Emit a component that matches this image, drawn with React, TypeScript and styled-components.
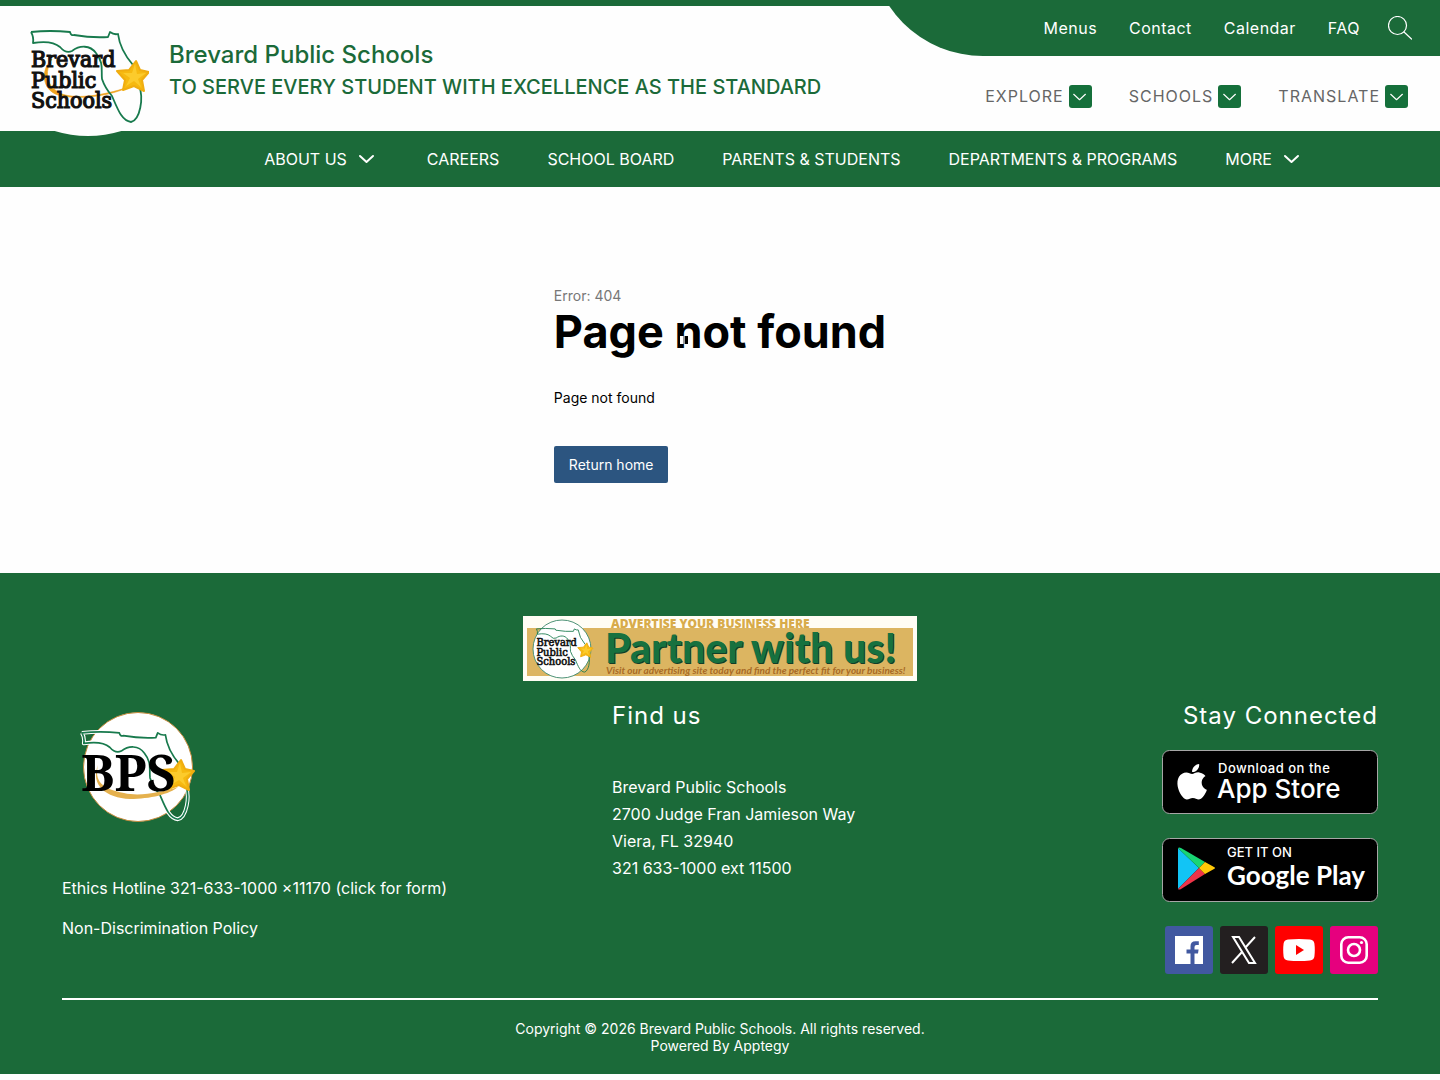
import React from 'react';
import styled, { createGlobalStyle } from 'styled-components';

const green = '#1b6a39';
const sans = `Inter, "Liberation Sans", sans-serif`;

const Global = createGlobalStyle`
  * { box-sizing: border-box; }
  body { margin: 0; background: #fff; font-family: ${sans}; font-size: 16px; color: #000; }
  a { color: inherit; text-decoration: none; }
  button { font: inherit; border: 0; padding: 0; background: none; color: inherit; cursor: pointer; }
  h1, h2, p, ul { margin: 0; padding: 0; }
  ul { list-style: none; }
  svg { display: block; }
`;

const Header = styled.header`
  display: flex;
  justify-content: space-between;
  border-top: 6px solid ${green};
  background: #fefefe;
  height: 131px;
`;
const Brand = styled.a`
  display: flex;
  gap: 20px;
  padding-left: 28px;
  color: ${green};
  font-weight: 500;
`;
const LogoBox = styled.span`
  position: relative;
  z-index: 1;
  width: 121px;
  height: 130px;
`;
const BrandText = styled.span`
  display: flex;
  flex-direction: column;
  padding-top: 32px;
`;
const BrandName = styled.span`
  font-size: 24px;
  line-height: 34px;
`;
const Motto = styled.span`
  font-size: 20px;
  line-height: 30px;
`;
const HeaderRight = styled.div`
  display: flex;
  flex-direction: column;
  align-items: flex-end;
  margin-top: -6px;
`;
const TopLinks = styled.nav`
  position: relative;
  overflow: hidden;
  display: flex;
  align-items: center;
  gap: 32px;
  height: 56px;
  padding: 0 28px 0 174px;
  color: #fff;
  letter-spacing: 0.03em;
  &::before {
    content: '';
    position: absolute;
    inset: -57px 0 0 0;
    border-bottom-left-radius: 113px;
    background: ${green};
  }
  > * { position: relative; }
`;
const SearchButton = styled.button`
  margin-left: -4px;
`;
const Selectors = styled.div`
  display: flex;
  gap: 37px;
  padding: 29px 32px 0 0;
`;
const Selector = styled.button`
  display: flex;
  align-items: flex-start;
  gap: 5px;
  color: #666;
  letter-spacing: 1px;
  line-height: 22px;
`;
const Badge = styled.span`
  display: grid;
  place-items: center;
  width: 23px;
  height: 23px;
  border-radius: 3px;
  background: #15703b;
`;
const MainNav = styled.nav`
  background: ${green};
  color: #fff;
  padding-left: 128px;
  ul { display: flex; justify-content: center; gap: 48px; }
  a, button { display: flex; align-items: center; gap: 10px; height: 56px; }
  svg { margin-right: 2px; }
`;
const Main = styled.main`
  display: flex;
  justify-content: center;
  background: #fefefe;
  padding: 100px 24px 90px;
`;
const ErrorCode = styled.p`
  font-size: 14px;
  line-height: 18px;
  color: #777;
`;
const Title = styled.h1`
  position: relative;
  font-size: 45px;
  line-height: 54px;
  font-weight: 700;
`;
const PauseMark = styled.span`
  position: absolute;
  left: 126px;
  top: 31px;
  width: 8px;
  height: 8px;
  background: linear-gradient(90deg, #fff 3px, #999 3px 5px, #000 5px);
`;
const Message = styled.p`
  margin: 29px 0 38px;
  font-size: 14px;
  line-height: 20px;
`;
const HomeLink = styled.a`
  display: inline-block;
  padding: 0 15px;
  border-radius: 2px;
  background: #2c5580;
  color: #fff;
  font-size: 14px;
  line-height: 37px;
`;
const Footer = styled.footer`
  background: ${green};
  color: #fff;
  padding: 43px 62px 20px;
`;
const Banner = styled.a`
  display: block;
  width: 394px;
  margin: 0 auto 18px;
`;
const PartnerHeadline = styled.text`
  font: 900 41px Lato, sans-serif;
  fill: #17713f;
  text-shadow: 1px 1px 0 #123d27;
`;
const Columns = styled.div`
  display: grid;
  grid-template-columns: 550px 1fr auto;
  height: 275px;
`;
const Policies = styled.div`
  display: flex;
  flex-direction: column;
  align-items: flex-start;
  gap: 16px;
  line-height: 24px;
  svg { margin: 12px 0 37px 16px; }
`;
const FooterTitle = styled.h2`
  font-size: 24px;
  line-height: 34px;
  font-weight: 400;
  letter-spacing: 1px;
`;
const Address = styled.address`
  margin-top: 41px;
  font-style: normal;
  line-height: 27px;
`;
const Connect = styled.div`
  display: flex;
  flex-direction: column;
  align-items: flex-end;
`;
const StoreLink = styled.a`
  margin: 17px 0 7px;
`;
const Socials = styled.div`
  display: flex;
  gap: 7px;
  margin-top: 17px;
`;
const Social = styled.a<{ $bg: string }>`
  display: grid;
  place-items: center;
  width: 48px;
  height: 48px;
  border-radius: 3px;
  background: ${(p) => p.$bg};
`;
const Legal = styled.div`
  margin-top: 24px;
  padding-top: 20px;
  border-top: 2px solid #fff;
  text-align: center;
  font-size: 14px;
  line-height: 17px;
`;

const Chevron = ({ w = 20, s = 2 }: { w?: number; s?: number }) => (
  <svg width={w} height={w} viewBox="0 0 20 20" fill="none" stroke="#fff" strokeWidth={s} strokeLinecap="round" strokeLinejoin="round" aria-hidden="true">
    <path d="M3 7l6.500 6 6.500-6" />
  </svg>
);

const serif = '"Noto Serif", "DejaVu Serif", "Liberation Serif", serif';
const wordSerif = '"DejaVu Serif Condensed", "DejaVu Serif", serif';

const Star = () => (
  <g>
    <path d="M108 33l4 9 9 2-7 8 2 11-10-5-11 4 2-10-8-9 12-1z" fill="#f6b910" stroke="#f0ad10" strokeWidth="2" strokeLinejoin="round" />
    <path d="M107 36l2 10 9-1-8 6 3 8-7-6-8 5 4-8-7-5 9 0z" fill="#fccb2c" />
  </g>
);

const Florida = ({ halo = false }: { halo?: boolean }) => {
  const d =
    'M3 4Q22 2 42 4Q43 8 46 7Q64 10 80 9L82 4Q86 7 90 6Q92 22 105 37M3 4Q6 9 5 15Q24 12 32 19Q38 26 44 23C52 17 62 17 68 25C76 35 73 42 74 51Q77 60 84 68C90 82 94 93 103 94C112 92 116 70 111 58';
  return (
    <g fill="none" strokeLinejoin="round">
      {halo && <path d={d} stroke="#fff" strokeWidth="4" />}
      <path d={d} stroke="#187a4d" strokeWidth="1.800" />
    </g>
  );
};

const Words = () => (
  <g fontFamily={wordSerif} fontSize="23" fill="#111" stroke="#111" strokeWidth="1.200">
    <text x="3" y="39">Brevard</text>
    <text x="3" y="60">Public</text>
    <text x="3" y="80">Schools</text>
  </g>
);

const BrevardLogo = () => (
  <svg width="121" height="130" viewBox="0 0 121 130" role="img" aria-label="Brevard Public Schools logo">
    <ellipse cx="60" cy="65" rx="87" ry="65" fill="#fefefe" />
    <g transform="translate(0 22)">
      <path d="M24 31C12 42 14 62 30 67C52 73 86 67 103 58C82 66 50 72 34 66C18 59 16 44 24 31z" fill="#f0a31f" stroke="#f0a31f" strokeWidth=".6" />
      <Florida />
      <Words />
      <Star />
    </g>
  </svg>
);

const BpsLogo = () => (
  <svg width="120" height="112" viewBox="0 0 120 112" role="img" aria-label="BPS logo">
    <circle cx="60" cy="56" r="54.500" fill="#fff" stroke="#c58a3b" />
    <g transform="translate(0 18)">
      <g transform="translate(1 0) scale(.96)"><Florida halo /></g>
      <path d="M20 36C12 56 28 69 52 70C72 70 92 65 100 58C84 63 62 68 46 64C24 60 16 52 20 36z" fill="#e5b14e" />
      <g transform="translate(-5 -2)"><Star /></g>
      <text x="3" y="62" fontFamily={serif} fontSize="50" fontWeight="700" fill="#000">BPS</text>
    </g>
  </svg>
);

const PartnerBanner = () => (
  <svg width="394" height="65" viewBox="0 0 394 65" role="img" aria-label="Partner with us">
    <rect width="394" height="65" fill="#fffdf4" />
    <rect x="4" y="12" width="386" height="48" fill="#dcb561" />
    <circle cx="39" cy="33" r="29" fill="#fff" stroke="#4d9277" />
    <g transform="translate(12 11) scale(.48)"><Florida /><Star /><Words /></g>
    <text x="88" y="12" fontFamily='"Open Sans", sans-serif' fontSize="12" fontWeight="800" fill="#d8ab4a">ADVERTISE YOUR BUSINESS HERE</text>
    <PartnerHeadline x="82" y="47">Partner with us!</PartnerHeadline>
    <text x="83" y="58" fontFamily="Lato, sans-serif" fontSize="10" fontStyle="italic" fontWeight="700" fill="#a86a25">Visit our advertising site today and find the perfect fit for your business!</text>
  </svg>
);

const AppStore = () => (
  <svg width="216" height="64" viewBox="0 0 216 64" role="img" aria-label="Download on the App Store">
    <rect x="0.500" y="0.500" width="215" height="63" rx="7" fill="#000" stroke="#a6a6a6" />
    <path transform="translate(6 8) scale(1.800)" fill="#fff" d="M18.700 13.700c0-2.400 2-3.600 2.100-3.700-1.200-1.700-3-1.900-3.600-2-1.500-.2-3 .9-3.800.9s-2-.9-3.200-.9C8.500 8 7 9 6.100 10.400c-1.800 3-.5 7.600 1.200 10.100.9 1.200 1.900 2.600 3.200 2.500s1.800-.8 3.300-.8 2 .8 3.300.8c1.400 0 2.300-1.200 3.100-2.400 1-1.400 1.400-2.800 1.400-2.900 0 0-2.900-1.100-2.900-4zM16.300 6.500c.7-.8 1.200-2 1-3.200-1 0-2.200.7-2.900 1.500-.6.700-1.200 1.900-1 3 1.100.1 2.200-.5 2.900-1.300z" />
    <text x="56" y="23" fill="#fff" fontFamily={sans} fontSize="13" fontWeight="500" letterSpacing=".5">Download on the</text>
    <text x="55" y="48" fill="#fff" fontFamily={sans} fontSize="26" fontWeight="500">App Store</text>
  </svg>
);

const GooglePlay = () => (
  <svg width="216" height="64" viewBox="0 0 216 64" role="img" aria-label="Get it on Google Play">
    <rect x="0.500" y="0.500" width="215" height="63" rx="7" fill="#000" stroke="#a6a6a6" />
    <path d="M16 10v41l21-21z" fill="#12c4f5" />
    <path d="M16 10l21 20 6-6-24-14q-2-1-3 0z" fill="#19d574" />
    <path d="M16 51l21-21 6 6-24 15q-2 1-3 0z" fill="#ee3448" />
    <path d="M43 24l9 5q2 1 0 2l-9 5-6-6z" fill="#ffc907" />
    <text x="65" y="19" fill="#fff" fontFamily={sans} fontSize="13" fontWeight="500">GET IT ON</text>
    <text x="65" y="47" fill="#fff" fontFamily="Lato, sans-serif" fontSize="26" fontWeight="700">Google Play</text>
  </svg>
);

const Facebook = () => (
  <svg width="28" height="28" viewBox="0 0 28 28" aria-hidden="true">
    <path fill="#fff" d="M0 0h28v28h-8.500V17.500h3.500l.6-4h-4.100V11q0-2 2-2h2.300V5.200h-3.300q-5 0-5 5v3.300h-4v4h4V28H0z" />
  </svg>
);
const XMark = () => (
  <svg width="26" height="28" viewBox="0 0 26 28" fill="none" stroke="#fff" strokeWidth="2" aria-hidden="true">
    <path d="M2 1h6l16 26h-6zM24 1L14 12M11 16L1 27" />
  </svg>
);
const YouTube = () => (
  <svg width="32" height="22" viewBox="0 0 32 22" aria-hidden="true">
    <path fill="#fff" d="M5 .6q11-1 22 0 4 .4 4.400 4 .8 6.400 0 12.800-.4 3.600-4.400 4-11 1-22 0-4-.4-4.400-4-.8-6.400 0-12.800Q1 1 5 .6z" />
    <path fill="#f00" d="M13 6l8 5-8 5z" />
  </svg>
);
const Instagram = () => (
  <svg width="28" height="28" viewBox="0 0 28 28" fill="none" stroke="#fff" strokeWidth="2.600" aria-hidden="true">
    <rect x="1.300" y="1.300" width="25.400" height="25.400" rx="7" />
    <circle cx="14" cy="14" r="6" />
    <circle cx="21.500" cy="6.500" r="1.600" fill="#fff" stroke="none" />
  </svg>
);

const navItems = ['ABOUT US', 'CAREERS', 'SCHOOL BOARD', 'PARENTS & STUDENTS', 'DEPARTMENTS & PROGRAMS', 'MORE'];

export default function App() {
  return (
    <>
      <Global />
      <Header>
        <Brand href="#">
          <LogoBox><BrevardLogo /></LogoBox>
          <BrandText>
            <BrandName>Brevard Public Schools</BrandName>
            <Motto>TO SERVE EVERY STUDENT WITH EXCELLENCE AS THE STANDARD</Motto>
          </BrandText>
        </Brand>
        <HeaderRight>
          <TopLinks>
            {['Menus', 'Contact', 'Calendar', 'FAQ'].map((t) => <a key={t} href="#">{t}</a>)}
            <SearchButton aria-label="Search">
              <svg width="24" height="24" viewBox="0 0 24 24" fill="none" stroke="#fff" strokeWidth="1.200" strokeLinecap="round">
                <circle cx="9.500" cy="9.500" r="9" /><path d="M16 16l7.500 7" />
              </svg>
            </SearchButton>
          </TopLinks>
          <Selectors>
            {['EXPLORE', 'SCHOOLS', 'TRANSLATE'].map((t) => (
              <Selector key={t}>{t}<Badge><Chevron w={18} s={1.3} /></Badge></Selector>
            ))}
          </Selectors>
        </HeaderRight>
      </Header>
      <MainNav>
        <ul>
          {navItems.map((t) => (
            <li key={t}>
              {t === 'ABOUT US' || t === 'MORE' ? <button>{t}<Chevron /></button> : <a href="#">{t}</a>}
            </li>
          ))}
        </ul>
      </MainNav>
      <Main>
        <div>
          <ErrorCode>Error: 404</ErrorCode>
          <Title>Page not found<PauseMark aria-hidden="true" /></Title>
          <Message>Page not found</Message>
          <HomeLink href="#">Return home</HomeLink>
        </div>
      </Main>
      <Footer>
        <Banner href="#"><PartnerBanner /></Banner>
        <Columns>
          <Policies>
            <BpsLogo />
            <a href="#">Ethics Hotline 321-633-1000 x11170 (click for form)</a>
            <a href="#">Non-Discrimination Policy</a>
          </Policies>
          <div>
            <FooterTitle>Find us</FooterTitle>
            <Address>Brevard Public Schools<br />2700 Judge Fran Jamieson Way<br />Viera, FL 32940<br />321 633-1000 ext 11500</Address>
          </div>
          <Connect>
            <FooterTitle>Stay Connected</FooterTitle>
            <StoreLink href="#"><AppStore /></StoreLink>
            <StoreLink href="#"><GooglePlay /></StoreLink>
            <Socials>
              <Social $bg="#4158a0" href="#" aria-label="Facebook"><Facebook /></Social>
              <Social $bg="#231f20" href="#" aria-label="X"><XMark /></Social>
              <Social $bg="#f00" href="#" aria-label="YouTube"><YouTube /></Social>
              <Social $bg="#e6007e" href="#" aria-label="Instagram"><Instagram /></Social>
            </Socials>
          </Connect>
        </Columns>
        <Legal>
          <p>Copyright © 2026 Brevard Public Schools. All rights reserved.</p>
          <p>Powered By <a href="#">Apptegy</a></p>
        </Legal>
      </Footer>
    </>
  );
}
